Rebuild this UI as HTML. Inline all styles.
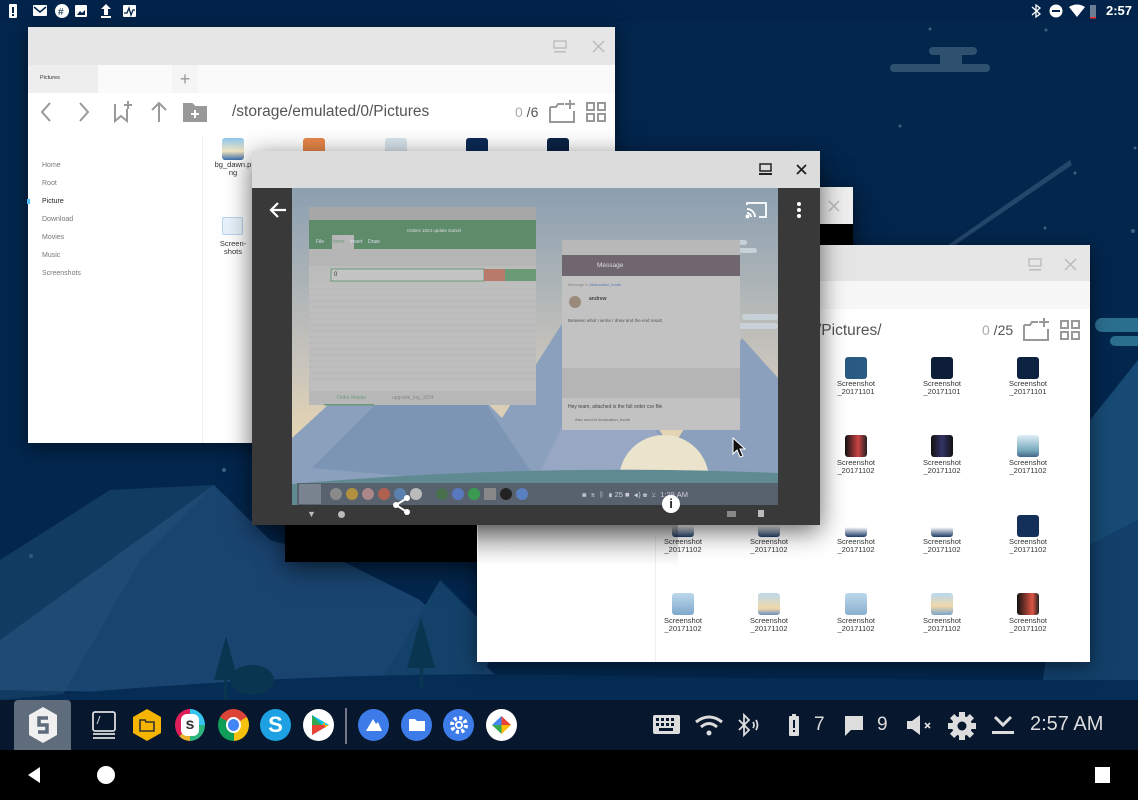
<!DOCTYPE html>
<html><head><meta charset="utf-8"><style>
*{margin:0;padding:0;box-sizing:border-box}
body{width:1138px;height:800px;overflow:hidden;background:#03264d;font-family:"Liberation Sans",sans-serif;position:relative}
.abs{position:absolute}
.win{position:absolute;background:#fff;box-shadow:0 4px 18px rgba(0,0,0,.5)}
.tb{position:absolute;left:0;right:0;top:0;background:#e6e6e6}
.side div{position:absolute;left:14px;font-size:7px;color:#777}
.lbl{position:absolute;font-size:7.5px;color:#333;text-align:center;width:60px;line-height:8px}
.thumb{position:absolute;width:22px;height:22px;border-radius:3px}
.ti{position:absolute;top:707px}
</style></head><body>
<!-- background -->
<svg class="abs" style="left:0;top:0" width="1138" height="800">
<rect width="1138" height="800" fill="#03264d"/>
<g fill="#7f9bb8" opacity=".5"><circle cx="930" cy="29" r="1.5"/><circle cx="1046" cy="30" r="1.5"/><circle cx="900" cy="126" r="1.5"/><circle cx="1135" cy="148" r="1.5"/><circle cx="1075" cy="173" r="1.5"/><circle cx="1045" cy="228" r="1.5"/><circle cx="1133" cy="231" r="2"/><circle cx="224" cy="470" r="2"/><circle cx="31" cy="556" r="2"/></g>
<g fill="#2e5170"><rect x="929" y="47" width="48" height="8" rx="4"/><rect x="890" y="64" width="100" height="8" rx="4"/><rect x="940" y="52" width="22" height="14"/></g>
<polygon points="948,245 1070,160 1072,165 955,245" fill="#3a5c80" opacity=".6"/>
<rect x="1095" y="318" width="60" height="14" rx="7" fill="#2b6f8f"/><rect x="1110" y="336" width="40" height="10" rx="5" fill="#2b6f8f"/>
<polygon points="0,690 0,640 214,485 270,540 340,560 420,600 520,700" fill="#1a4470"/>
<polygon points="0,700 0,560 110,490 214,485 140,560 60,700" fill="#224f78" opacity=".5"/>
<polygon points="370,700 440,580 500,640 470,700" fill="#144169"/>
<polygon points="1090,420 1138,360 1138,700 1060,700" fill="#174a74"/>
<polygon points="1060,560 1138,520 1138,700 1040,700" fill="#12406a"/>
<path d="M0 700 Q300 670 560 675 T1138 680 V700 H0Z" fill="#062d55"/>
<polygon points="226,636 214,680 238,680" fill="#0a3550"/><rect x="224" y="680" width="3" height="20" fill="#0a3550"/>
<polygon points="421,617 407,668 435,668" fill="#0a3550"/><rect x="420" y="668" width="3" height="20" fill="#0a3550"/>
<ellipse cx="252" cy="680" rx="22" ry="15" fill="#0a3550"/>
</svg>
<!-- status bar -->
<div class="abs" style="left:0;top:0;width:1138px;height:22px;background:#02234a"></div>
<svg class="abs" style="left:8px;top:4px" width="140" height="15" fill="#fff">
<rect x="1" y="0" width="8" height="14" rx="1"/><rect x="4" y="3" width="2" height="6" fill="#02234a"/><rect x="4" y="10" width="2" height="2" fill="#02234a"/>
<rect x="25" y="1" width="14" height="11" rx="1"/><path d="M26 3 L32 8 L38 3" stroke="#02234a" stroke-width="1.5" fill="none"/>
<circle cx="54" cy="7" r="7"/><text x="50" y="11" font-size="10" fill="#02234a" font-family="Liberation Sans">#</text>
<rect x="67" y="1" width="12" height="12" rx="1"/><path d="M69 11 L72 7 L74 9 L77 6 L77 11Z" fill="#02234a"/>
<path d="M98 0 L103 5 L100 5 L100 11 L96 11 L96 5 L93 5Z"/><rect x="93" y="12" width="10" height="2"/>
<rect x="115" y="1" width="13" height="12" rx="1"/><path d="M116 9 L119 9 L121 4 L123 11 L125 6 L127 6" stroke="#02234a" stroke-width="1.3" fill="none"/>
</svg>
<svg class="abs" style="left:1030px;top:4px" width="70" height="15" fill="#fff">
<path d="M2 3 L10 10 L6 13 L6 1 L10 4 L2 11" stroke="#fff" stroke-width="1.3" fill="none"/>
<circle cx="26" cy="7" r="6.5"/><rect x="22" y="6" width="8" height="2" fill="#02234a"/>
<path d="M39 3 Q47 -2 55 3 L47 13Z"/>
<rect x="60" y="1" width="6" height="13" fill="#6b7f94"/><rect x="60" y="13" width="6" height="1.5" fill="#e33"/>
</svg>
<div class="abs" style="left:1106px;top:3px;color:#fff;font-size:13px;font-weight:bold">2:57</div>

<!-- Window A -->
<div class="win" style="left:28px;top:27px;width:587px;height:416px">
 <div class="tb" style="height:38px"></div>
 <svg class="abs" style="left:525px;top:13px" width="60" height="14"><rect x="1" y="1" width="12" height="7" fill="none" stroke="#bbb" stroke-width="1.3"/><rect x="1" y="11" width="12" height="1.5" fill="#bbb"/><path d="M40 1 L51 12 M51 1 L40 12" stroke="#bbb" stroke-width="1.5"/></svg>
 <div class="abs" style="left:0;top:38px;width:587px;height:28px;background:#fafafa"></div>
 <div class="abs" style="left:0;top:38px;width:70px;height:28px;background:#eee;font-size:5.5px;color:#333;padding:10px 0 0 12px">Pictures</div>
 <div class="abs" style="left:144px;top:38px;width:26px;height:28px;background:#f5f5f5;color:#999;font-size:18px;text-align:center;line-height:28px">+</div>
 <svg class="abs" style="left:10px;top:72px" width="170" height="26" fill="none" stroke="#999" stroke-width="2">
  <path d="M12 4 L4 13 L12 22"/><path d="M42 4 L50 13 L42 22"/>
  <path d="M77 5 V22 L83 17 L89 22 V10" /><path d="M90 2 V10 M86 6 H94"/>
  <path d="M121 4 V23 M114 11 L121 4 L128 11"/>
  <path d="M146 5 H154 L157 8 H168 V22 H146Z" fill="#999"/><path d="M157 11 V19 M153 15 H161" stroke="#fff"/>
 </svg>
 <div class="abs" style="left:204px;top:76px;font-size:15.5px;color:#555">/storage/emulated/0/Pictures</div>
 <div class="abs" style="left:487px;top:77px;font-size:14px;color:#555"><span style="color:#aaa">0</span> /6</div>
 <svg class="abs" style="left:520px;top:72px" width="62" height="26" fill="none" stroke="#999" stroke-width="2"><path d="M2 8 H8 L10 5 H16 M26 12 V23 H2 V8"/><path d="M22 1 V10 M17 5 H27"/><rect x="39" y="4" width="7" height="7"/><rect x="50" y="4" width="7" height="7"/><rect x="39" y="15" width="7" height="7"/><rect x="50" y="15" width="7" height="7"/></svg>
 <div class="side">
  <div style="top:135px">Home</div><div style="top:153px">Root</div><div style="top:171px;color:#222">Picture</div><div style="top:189px">Download</div><div style="top:207px">Movies</div><div style="top:225px">Music</div><div style="top:243px">Screenshots</div>
 </div>
 <div class="abs" style="left:-1px;top:172px;width:3px;height:5px;background:#4fc3f7"></div>
 <div class="abs" style="left:174px;top:110px;width:1px;height:306px;background:#eee"></div>
 <div class="thumb" style="left:194px;top:111px;background:linear-gradient(#8fc5ef,#f2e6c0 60%,#3a6fae)"></div>
 <div class="lbl" style="left:175px;top:134px">bg_dawn.p<br>ng</div>
 <div class="thumb" style="left:275px;top:111px;background:#e8874a"></div>
 <div class="thumb" style="left:357px;top:111px;background:#d9e4ec"></div>
 <div class="thumb" style="left:438px;top:111px;background:#0b2a57"></div>
 <div class="thumb" style="left:519px;top:111px;background:#0b2345"></div>
 <div class="abs" style="left:194px;top:190px;width:21px;height:18px;background:#e8f2fb;border:1px solid #b8d4ee;border-radius:2px"></div>
 <div class="lbl" style="left:175px;top:213px">Screen-<br>shots</div>
</div>

<!-- Window B (black) -->
<div class="abs" style="left:285px;top:187px;width:568px;height:375px;background:#000;box-shadow:0 6px 24px rgba(0,0,0,.6)">
 <div class="abs" style="left:0;top:0;width:568px;height:37px;background:#eee"></div>
 <svg class="abs" style="left:543px;top:13px" width="12" height="12"><path d="M1 1 L11 11 M11 1 L1 11" stroke="#bbb" stroke-width="1.5"/></svg>
</div>

<!-- Window C -->
<div class="win" style="left:477px;top:245px;width:613px;height:417px">
 <div class="tb" style="height:36px"></div>
 <div class="abs" style="left:0;top:36px;width:613px;height:28px;background:#f7f7f7"></div>
 <svg class="abs" style="left:551px;top:13px" width="52" height="14"><rect x="1" y="1" width="12" height="7" fill="none" stroke="#bbb" stroke-width="1.3"/><rect x="1" y="11" width="12" height="1.5" fill="#bbb"/><path d="M37 1 L48 12 M48 1 L37 12" stroke="#bbb" stroke-width="1.5"/></svg>
 <div class="abs" style="left:340px;top:77px;font-size:15.5px;color:#555">/Pictures/</div>
 <div class="abs" style="left:505px;top:77px;font-size:14px;color:#555"><span style="color:#aaa">0</span> /25</div>
 <svg class="abs" style="left:545px;top:72px" width="62" height="26" fill="none" stroke="#999" stroke-width="2"><path d="M2 8 H8 L10 5 H16 M26 12 V23 H2 V8"/><path d="M22 1 V10 M17 5 H27"/><rect x="39" y="4" width="7" height="7"/><rect x="50" y="4" width="7" height="7"/><rect x="39" y="15" width="7" height="7"/><rect x="50" y="15" width="7" height="7"/></svg>
 <div class="abs" style="left:178px;top:290px;width:1px;height:127px;background:#eee"></div>
 <!-- row1 -->
 <div class="thumb" style="left:368px;top:112px;background:#2b5a85"></div><div class="lbl" style="left:349px;top:135px">Screenshot<br>_20171101</div>
 <div class="thumb" style="left:454px;top:112px;background:#0c1e38"></div><div class="lbl" style="left:435px;top:135px">Screenshot<br>_20171101</div>
 <div class="thumb" style="left:540px;top:112px;background:#0d2240"></div><div class="lbl" style="left:521px;top:135px">Screenshot<br>_20171101</div>
 <!-- row2 -->
 <div class="thumb" style="left:368px;top:190px;background:linear-gradient(90deg,#111,#c44 60%,#222)"></div><div class="lbl" style="left:349px;top:214px">Screenshot<br>_20171102</div>
 <div class="thumb" style="left:454px;top:190px;background:linear-gradient(90deg,#111,#336,#111)"></div><div class="lbl" style="left:435px;top:214px">Screenshot<br>_20171102</div>
 <div class="thumb" style="left:540px;top:190px;background:linear-gradient(#dfeef8,#7ab 70%,#468)"></div><div class="lbl" style="left:521px;top:214px">Screenshot<br>_20171102</div>
 <!-- row3 -->
 <div class="thumb" style="left:195px;top:270px;background:linear-gradient(#fff 50%,#1d3c66)"></div><div class="lbl" style="left:176px;top:293px">Screenshot<br>_20171102</div>
 <div class="thumb" style="left:281px;top:270px;background:linear-gradient(#fff 50%,#1d3c66)"></div><div class="lbl" style="left:262px;top:293px">Screenshot<br>_20171102</div>
 <div class="thumb" style="left:368px;top:270px;background:linear-gradient(#fff 55%,#1d3c66)"></div><div class="lbl" style="left:349px;top:293px">Screenshot<br>_20171102</div>
 <div class="thumb" style="left:454px;top:270px;background:linear-gradient(#fff 55%,#1d3c66)"></div><div class="lbl" style="left:435px;top:293px">Screenshot<br>_20171102</div>
 <div class="thumb" style="left:540px;top:270px;background:#12305a"></div><div class="lbl" style="left:521px;top:293px">Screenshot<br>_20171102</div>
 <!-- row4 -->
 <div class="thumb" style="left:195px;top:348px;background:linear-gradient(#bcd8ec,#7fa8cc)"></div><div class="lbl" style="left:176px;top:372px">Screenshot<br>_20171102</div>
 <div class="thumb" style="left:281px;top:348px;background:linear-gradient(#bcd8ec,#f0d8a8 70%,#6a8ec0)"></div><div class="lbl" style="left:262px;top:372px">Screenshot<br>_20171102</div>
 <div class="thumb" style="left:368px;top:348px;background:linear-gradient(#bcd8ec,#8ab0d0)"></div><div class="lbl" style="left:349px;top:372px">Screenshot<br>_20171102</div>
 <div class="thumb" style="left:454px;top:348px;background:linear-gradient(#b8d8f0,#f0d8a8 60%,#7aa4cc)"></div><div class="lbl" style="left:435px;top:372px">Screenshot<br>_20171102</div>
 <div class="thumb" style="left:540px;top:348px;background:linear-gradient(90deg,#111,#d54 70%,#222)"></div><div class="lbl" style="left:521px;top:372px">Screenshot<br>_20171102</div>
</div>
<!-- shadow gradient over window C from player -->
<div class="abs" style="left:478px;top:525px;width:200px;height:40px;background:linear-gradient(rgba(0,0,0,.25),rgba(0,0,0,0))"></div>

<!-- Window D (player) -->
<div class="abs" style="left:252px;top:151px;width:568px;height:374px;background:#393939;box-shadow:0 6px 24px rgba(0,0,0,.6)">
 <div class="abs" style="left:0;top:0;width:568px;height:37px;background:#dcdcdc"></div>
 <svg class="abs" style="left:506px;top:12px" width="50" height="14"><rect x="2" y="1" width="11" height="7" fill="none" stroke="#222" stroke-width="1.5"/><rect x="1" y="10" width="13" height="2" fill="#222"/><path d="M39 2 L48 11 M48 2 L39 11" stroke="#222" stroke-width="1.8"/></svg>
 <!-- image -->
 <div class="abs" style="left:40px;top:37px;width:486px;height:317px;overflow:hidden;background:linear-gradient(#8b9fb0,#c8c4bc 55%,#e6d5b2 80%)">
  <svg class="abs" style="left:0;top:0" width="486" height="317">
   <polygon points="0,250 120,140 210,230 280,120 380,260 450,150 486,190 486,317 0,317" fill="#8aa0bc"/>
   <polygon points="20,280 150,150 250,300" fill="#7c95b4"/>
   <polygon points="300,180 420,300 240,300" fill="#98a8c4"/>
   <circle cx="372" cy="292" r="45" fill="#ece3cc"/>
   <path d="M0 296 Q240 275 486 285 V317 H0Z" fill="#5f8a92"/>
   <rect x="452" y="-1" width="0" height="0"/>
   <g fill="#c9d1d8"><rect x="395" y="60" width="70" height="5" rx="2.5"/><rect x="425" y="52" width="30" height="5" rx="2.5"/><rect x="440" y="135" width="46" height="6" rx="3"/><rect x="450" y="126" width="36" height="6" rx="3"/></g>
   <!-- excel -->
   <rect x="17" y="19" width="227" height="198" fill="#b2b2b2"/>
   <rect x="17" y="19" width="227" height="13" fill="#a7a7a7"/>
   <rect x="17" y="32" width="227" height="29" fill="#5e8c6a"/>
   <rect x="40" y="47" width="22" height="14" fill="#b7b7b7"/>
   <rect x="17" y="61" width="227" height="17" fill="#b5b5b5"/>
   <rect x="17" y="78" width="227" height="17" fill="#bcbcbc"/>
   <rect x="39" y="81" width="153" height="12" fill="#c4c4c4" stroke="#6e9a7a"/>
   <rect x="192" y="81" width="21" height="12" fill="#b87a6a"/><rect x="213" y="81" width="31" height="12" fill="#6a9a76"/>
   <rect x="17" y="95" width="227" height="108" fill="#bebebe"/>
   <g stroke="#aaa" stroke-width=".4"><line x1="17" y1="101" x2="244" y2="101"/><line x1="17" y1="107" x2="244" y2="107"/><line x1="17" y1="113" x2="244" y2="113"/><line x1="17" y1="119" x2="244" y2="119"/><line x1="17" y1="125" x2="244" y2="125"/><line x1="17" y1="131" x2="244" y2="131"/><line x1="17" y1="137" x2="244" y2="137"/><line x1="17" y1="143" x2="244" y2="143"/><line x1="17" y1="149" x2="244" y2="149"/><line x1="17" y1="155" x2="244" y2="155"/><line x1="17" y1="161" x2="244" y2="161"/><line x1="17" y1="167" x2="244" y2="167"/><line x1="17" y1="173" x2="244" y2="173"/><line x1="17" y1="179" x2="244" y2="179"/><line x1="17" y1="185" x2="244" y2="185"/><line x1="17" y1="191" x2="244" y2="191"/></g>
   <rect x="17" y="203" width="227" height="14" fill="#b8b8b8"/>
   <rect x="32" y="216" width="50" height="1.5" fill="#6a9a76"/>
   <!-- message -->
   <rect x="270" y="52" width="178" height="190" fill="#c2c2c2"/>
   <rect x="270" y="52" width="178" height="15" fill="#b9b9b9"/>
   <rect x="270" y="67" width="178" height="21" fill="#6f6670"/>
   <rect x="270" y="180" width="178" height="30" fill="#b5b5b5"/>
   <circle cx="283" cy="114" r="6" fill="#9a8a7a"/>
  </svg>
  <div class="abs" style="left:115px;top:40px;font-size:4.5px;color:#ddd">Orders 1024 update Daniel</div>
  <div class="abs" style="left:24px;top:51px;font-size:5px;color:#dde">File&nbsp;&nbsp;&nbsp;&nbsp;&nbsp;<span style="color:#6e9a7a">Home</span>&nbsp;&nbsp;&nbsp;&nbsp;Insert&nbsp;&nbsp;&nbsp;&nbsp;Draw</div>
  <div class="abs" style="left:42px;top:84px;font-size:6px;color:#333">0</div>
  <div class="abs" style="left:45px;top:207px;font-size:5px;color:#6e9a7a">Order Master</div>
  <div class="abs" style="left:100px;top:207px;font-size:5px;color:#888">upgrade_log_1024</div>
  <div class="abs" style="left:305px;top:74px;font-size:6.5px;color:#ddd">Message</div>
  <div class="abs" style="left:276px;top:94px;font-size:4px;color:#888">Message in <span style="color:#5a7ab0">#education_booth</span></div>
  <div class="abs" style="left:297px;top:108px;font-size:5px;color:#444;font-weight:bold">andrew</div>
  <div class="abs" style="left:276px;top:130px;font-size:4.5px;color:#555">Between what I wrote / drew and the end result</div>
  <div class="abs" style="left:276px;top:216px;font-size:5px;color:#444">Hey team, attached is the full order csv file</div>
  <div class="abs" style="left:283px;top:229px;font-size:4px;color:#666">Also send to #education_booth</div>
  <!-- inner taskbar -->
  <div class="abs" style="left:5px;top:295px;width:481px;height:22px;background:#58626e"></div>
  <div class="abs" style="left:7px;top:296px;width:22px;height:20px;background:#7a8490"></div>
  <div class="abs" style="left:38px;top:300px;display:flex;gap:4px">
   <i style="width:12px;height:12px;border-radius:50%;background:#8a8a8a"></i><i style="width:12px;height:12px;border-radius:50%;background:#b09040"></i><i style="width:12px;height:12px;border-radius:50%;background:#a88"></i><i style="width:12px;height:12px;border-radius:50%;background:#b06050"></i><i style="width:12px;height:12px;border-radius:50%;background:#5a80b0"></i><i style="width:12px;height:12px;border-radius:50%;background:#bbb"></i><i style="width:6px"></i><i style="width:12px;height:12px;border-radius:50%;background:#4a7050"></i><i style="width:12px;height:12px;border-radius:50%;background:#5a78c0"></i><i style="width:12px;height:12px;border-radius:50%;background:#3a9a50"></i><i style="width:12px;height:12px;background:#888"></i><i style="width:12px;height:12px;border-radius:50%;background:#222"></i><i style="width:12px;height:12px;border-radius:50%;background:#5a80c0"></i>
  </div>
  <div class="abs" style="left:290px;top:302px;font-size:7.5px;color:#ccd">▦ &nbsp;≋ &nbsp;ᛒ &nbsp;▮ 25 ■ &nbsp;◀) ✿ &nbsp;⊻ &nbsp;1:29 AM</div>
 </div>
 <svg class="abs" style="left:16px;top:50px" width="20" height="18"><path d="M18 9 H3 M10 2 L3 9 L10 16" stroke="#fff" stroke-width="2.2" fill="none"/></svg>
 <svg class="abs" style="left:493px;top:49px" width="24" height="20" fill="none" stroke="#fff" stroke-width="1.8"><path d="M2 5 V3 H21 V17 H14"/><path d="M2 9 A8 8 0 0 1 10 17 M2 13 A4 4 0 0 1 6 17"/><circle cx="2.5" cy="16.5" r="1" fill="#fff"/></svg>
 <svg class="abs" style="left:544px;top:50px" width="6" height="18" fill="#fff"><circle cx="3" cy="3" r="2"/><circle cx="3" cy="9" r="2"/><circle cx="3" cy="15" r="2"/></svg>
 <svg class="abs" style="left:139px;top:343px" width="22" height="22" fill="#fff"><circle cx="16" cy="4" r="3"/><circle cx="5" cy="11" r="3"/><circle cx="16" cy="18" r="3"/><path d="M16 4 L5 11 L16 18" stroke="#fff" stroke-width="2" fill="none"/></svg>
 <div class="abs" style="left:410px;top:344px;width:18px;height:18px;border-radius:50%;background:#fff;color:#222;font-size:13px;font-weight:bold;text-align:center;line-height:18px">i</div>
 <div class="abs" style="left:55px;top:358px;color:#bbb;font-size:9px">▼</div>
 <div class="abs" style="left:86px;top:360px;width:7px;height:7px;border-radius:50%;background:#bbb"></div>
 <div class="abs" style="left:475px;top:360px;width:9px;height:6px;background:#888"></div>
 <div class="abs" style="left:506px;top:359px;width:6px;height:7px;background:#bbb"></div>
</div>
<svg class="abs" style="left:731px;top:437px" width="16" height="22"><path d="M2 1 L2 17 L6 13 L9 20 L12 19 L9 12 L14 12Z" fill="#111" stroke="#fff" stroke-width="1"/></svg>

<!-- taskbar -->
<div class="abs" style="left:0;top:700px;width:1138px;height:50px;background:#07172e"></div>
<div class="abs" style="left:14px;top:700px;width:57px;height:50px;background:#5f6c7c;border-radius:4px 4px 0 0"></div>
<svg class="abs" style="left:26px;top:705px" width="34" height="40"><polygon points="17,2 31,10 31,30 17,38 3,30 3,10" fill="#f0f0f0"/><path d="M22 13 H13 V20 H21 V27 H12" stroke="#5f6c7c" stroke-width="3.5" fill="none"/></svg>
<svg class="abs" style="left:90px;top:710px" width="28" height="30" fill="none" stroke="#ddd" stroke-width="1.8"><rect x="3" y="2" width="22" height="19" rx="2"/><path d="M3 24 H25 M3 28 H25"/><path d="M7 14 L10 6" stroke-width="1"/></svg>
<svg class="abs" style="left:132px;top:708px" width="30" height="34"><polygon points="15,1 29,9 29,25 15,33 1,25 1,9" fill="#f4b400"/><path d="M8 12 H13 L14 14 H22 V23 H8Z" fill="none" stroke="#333" stroke-width="1.6"/></svg>
<div class="abs" style="left:175px;top:709px;width:30px;height:32px;border-radius:50%;background:conic-gradient(#36c5f0 0 25%,#2eb67d 0 50%,#ecb22e 0 62%,#e01e5a 0 100%)"></div><div class="abs" style="left:181px;top:714px;width:18px;height:22px;border-radius:6px;background:#fff;font-weight:bold;font-size:16px;text-align:center;color:#333;line-height:22px">s</div>
<div class="abs" style="left:218px;top:709px;width:31px;height:32px;border-radius:50%;background:conic-gradient(from -60deg,#db4437 0 33%,#f4c20d 0 66%,#0f9d58 0 100%)"></div><div class="abs" style="left:226px;top:717px;width:15px;height:16px;border-radius:50%;background:#4285f4;border:2.5px solid #fff"></div>
<div class="abs" style="left:260px;top:709px;width:31px;height:32px;border-radius:50%;background:#1da1e2;color:#fff;font-weight:bold;font-size:22px;text-align:center;line-height:32px">S</div>
<div class="abs" style="left:303px;top:709px;width:31px;height:32px;border-radius:50%;background:#fff"></div>
<svg class="abs" style="left:309px;top:714px" width="22" height="22"><polygon points="3,1 3,21 20,11" fill="#00c0f0"/><polygon points="3,11 20,11 3,21" fill="#ea4335"/><polygon points="3,1 13,11 3,11" fill="#34a853"/><polygon points="13,11 20,11 16,14 16,8" fill="#fbbc05"/></svg>
<div class="abs" style="left:345px;top:708px;width:2px;height:36px;background:#778"></div>
<div class="abs" style="left:358px;top:709px;width:31px;height:32px;border-radius:50%;background:#3d7ce8"></div><svg class="abs" style="left:364px;top:716px" width="20" height="18"><polygon points="2,15 9,3 12,8 14,6 18,15" fill="#fff"/></svg>
<div class="abs" style="left:401px;top:709px;width:31px;height:32px;border-radius:50%;background:#3d7ce8"></div><svg class="abs" style="left:407px;top:716px" width="20" height="18"><path d="M2 3 H8 L10 5 H18 V15 H2Z" fill="#fff"/></svg>
<div class="abs" style="left:443px;top:709px;width:31px;height:32px;border-radius:50%;background:#3d7ce8"></div><svg class="abs" style="left:449px;top:715px" width="20" height="20"><circle cx="10" cy="10" r="7" fill="none" stroke="#fff" stroke-width="4" stroke-dasharray="3 2.5"/><circle cx="10" cy="10" r="3" fill="none" stroke="#fff" stroke-width="2"/></svg>
<div class="abs" style="left:486px;top:709px;width:31px;height:32px;border-radius:50%;background:#fff"></div><div class="abs" style="left:492px;top:716px;width:19px;height:18px;background:conic-gradient(#ea4335 0 25%,#fbbc05 0 50%,#34a853 0 75%,#4285f4 0);clip-path:polygon(50% 0,100% 50%,50% 100%,0 50%)"></div>
<!-- tray -->
<svg class="abs" style="left:652px;top:713px" width="30" height="24"><rect x="1" y="2" width="27" height="19" rx="2" fill="#ddd"/><g fill="#07172e"><rect x="4" y="5" width="3" height="3"/><rect x="9" y="5" width="3" height="3"/><rect x="14" y="5" width="3" height="3"/><rect x="19" y="5" width="3" height="3"/><rect x="4" y="10" width="3" height="3"/><rect x="9" y="10" width="3" height="3"/><rect x="14" y="10" width="3" height="3"/><rect x="19" y="10" width="3" height="3"/><rect x="7" y="15" width="14" height="3"/></g></svg>
<svg class="abs" style="left:694px;top:714px" width="30" height="24" fill="none" stroke="#ddd" stroke-width="3"><path d="M2 8 Q15 -2 28 8"/><path d="M7 13 Q15 6 23 13"/><circle cx="15" cy="19" r="2.5" fill="#ddd" stroke="none"/></svg>
<svg class="abs" style="left:737px;top:713px" width="24" height="26" fill="none" stroke="#ddd" stroke-width="1.8"><path d="M2 7 L12 17 L7 22 V2 L12 7 L2 17"/><path d="M16 9 Q18 12 16 15 M19 7 Q22 12 19 17"/></svg>
<svg class="abs" style="left:788px;top:713px" width="12" height="24"><rect x="1" y="3" width="10" height="20" rx="1" fill="#ddd"/><rect x="4" y="1" width="4" height="3" fill="#ddd"/><rect x="5" y="7" width="2" height="8" fill="#07172e"/><rect x="5" y="17" width="2" height="2" fill="#07172e"/></svg>
<div class="abs" style="left:814px;top:714px;color:#ddd;font-size:19px">7</div>
<svg class="abs" style="left:843px;top:714px" width="22" height="24"><path d="M2 2 H20 V16 H8 L2 22Z" fill="#ddd"/></svg>
<div class="abs" style="left:877px;top:714px;color:#ddd;font-size:19px">9</div>
<svg class="abs" style="left:905px;top:713px" width="30" height="24"><path d="M2 8 H7 L15 2 V22 L7 16 H2Z" fill="#ddd"/><path d="M20 10 L25 15 M25 10 L20 15" stroke="#ddd" stroke-width="1.6"/></svg>
<svg class="abs" style="left:947px;top:711px" width="30" height="30"><g fill="#ddd"><circle cx="15" cy="15" r="10"/><rect x="12" y="1" width="6" height="28"/><rect x="1" y="12" width="28" height="6"/><rect x="12" y="1" width="6" height="28" transform="rotate(45 15 15)"/><rect x="12" y="1" width="6" height="28" transform="rotate(-45 15 15)"/></g><circle cx="15" cy="15" r="4.5" fill="#07172e"/></svg>
<svg class="abs" style="left:990px;top:713px" width="26" height="24"><path d="M5 4 L13 12 L21 4" stroke="#ddd" stroke-width="3" fill="none"/><rect x="2" y="18" width="22" height="3" fill="#ddd"/></svg>
<div class="abs" style="left:1030px;top:713px;color:#ddd;font-size:20px">2:57 AM</div>
<!-- nav bar -->
<div class="abs" style="left:0;top:750px;width:1138px;height:50px;background:#000"></div>
<svg class="abs" style="left:26px;top:766px" width="16" height="18"><polygon points="14,1 14,17 2,9" fill="#fff"/></svg>
<div class="abs" style="left:97px;top:766px;width:18px;height:18px;border-radius:50%;background:#fff"></div>
<div class="abs" style="left:1095px;top:767px;width:15px;height:16px;background:#fff"></div>
</body></html>
